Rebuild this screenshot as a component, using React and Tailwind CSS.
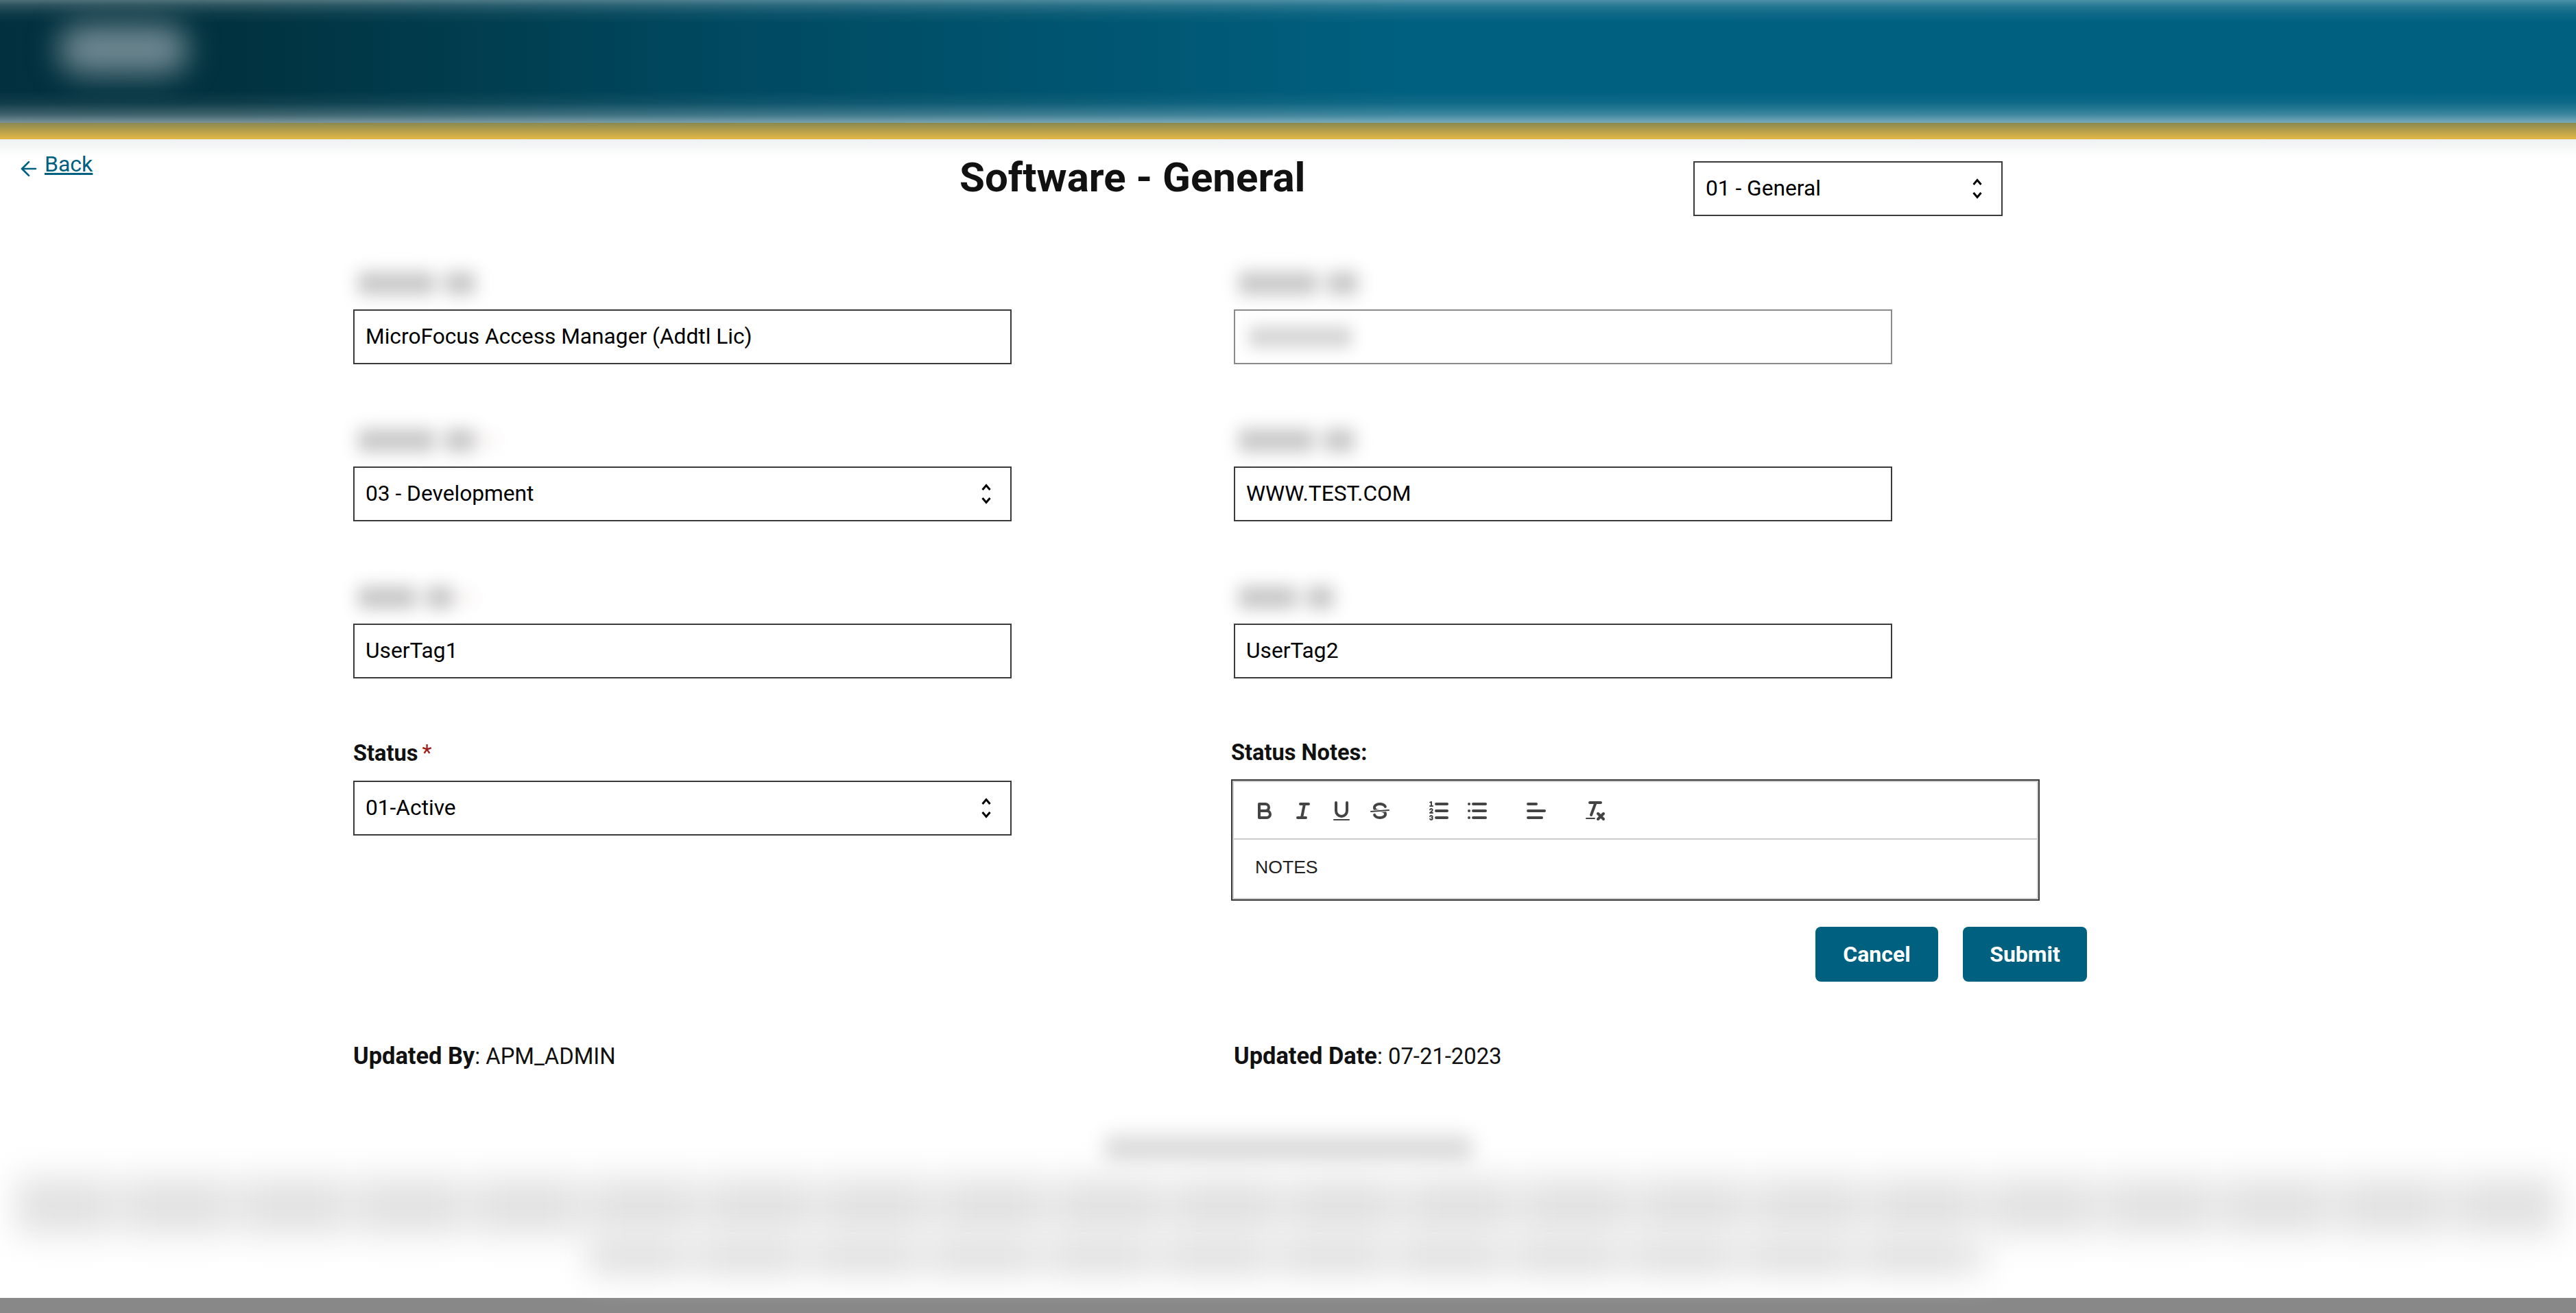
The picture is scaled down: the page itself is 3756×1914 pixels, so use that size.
import React from "react";
import { ArrowLeft } from "lucide-react";

// blurred-out label: two smudges, optional faint red star
const BlurLabel = ({ first = "w-[112px]", second = "w-[45px]", star }) => (
  <div className="h-[80px] flex items-center pt-[4px] pl-[7px]">
    <div className="flex items-center gap-[14px] blur-[12px]">
      <div className={`h-[34px] bg-[#c8c8c8] ${first}`} />
      <div className={`h-[34px] bg-[#c8c8c8] ${second}`} />
      {star && <div className="h-[16px] w-[10px] bg-[#eed8d8]" />}
    </div>
  </div>
);

const Stepper = () => (
  <svg viewBox="0 0 16 30" className="w-[16px] h-[30px] mr-[27px] shrink-0" fill="none" stroke="#000000" strokeWidth="3">
    <path d="M2.5 9 L8 2.5 L13.5 9" />
    <path d="M2.5 21 L8 27.5 L13.5 21" />
  </svg>
);

const Field = ({ children, disabled }) => (
  <div
    className={`h-[80px] border-2 flex items-center justify-between pl-[16px] text-[31.7px] text-black bg-white ${
      disabled ? "border-[#8a8a8a]" : "border-[#3a3a3a]"
    }`}
  >
    {children}
  </div>
);

const SelectField = ({ value }) => (
  <Field>
    <span>{value}</span>
    <Stepper />
  </Field>
);

const Icon = ({ children, className = "" }) => (
  <svg
    viewBox="0 0 18 18"
    className={`w-[36px] h-[36px] shrink-0 ${className}`}
    fill="none"
    stroke="#444444"
    strokeWidth="2"
    strokeLinecap="round"
    strokeLinejoin="round"
  >
    {children}
  </svg>
);

const Toolbar = () => (
  <div className="h-[84px] shrink-0 border-b-2 border-[#cccccc] flex items-center gap-[20px] pl-[27px] pt-[1px]">
    <Icon>
      <path d="M5,4H9.5A2.5,2.5,0,0,1,12,6.5v0A2.5,2.5,0,0,1,9.5,9H5V4Z" />
      <path d="M5,9h5.5A2.5,2.5,0,0,1,13,11.5v0A2.5,2.5,0,0,1,10.5,14H5V9Z" />
    </Icon>
    <Icon>
      <line x1="7" x2="13" y1="4" y2="4" />
      <line x1="5" x2="11" y1="14" y2="14" />
      <line x1="8" x2="10" y1="14" y2="4" />
    </Icon>
    <Icon>
      <path d="M5,3V9a4.012,4.012,0,0,0,4,4H9a4.012,4.012,0,0,0,4-4V3" />
      <rect x="3" y="15" width="12" height="1" rx="0.5" ry="0.5" fill="#444444" stroke="none" />
    </Icon>
    <Icon className="mr-[30px]">
      <line x1="15.5" x2="2.5" y1="8.5" y2="9.5" strokeWidth="1" />
      <path
        fill="#444444"
        stroke="none"
        d="M9.007,8C6.542,7.791,6,7.519,6,6.5,6,5.792,7.283,5,9,5c1.571,0,2.765.679,2.969,1.309a1,1,0,0,0,1.9-.617C13.356,4.106,11.354,3,9,3,6.2,3,4,4.538,4,6.5a3.2,3.2,0,0,0,.5,1.843Z"
      />
      <path
        fill="#444444"
        stroke="none"
        d="M8.984,10C11.457,10.208,12,10.479,12,11.5c0,.708-1.283,1.5-3,1.5-1.571,0-2.765-.679-2.969-1.309a1,1,0,1,0-1.9.617C4.644,13.894,6.646,15,9,15c2.8,0,5-1.538,5-3.5a3.2,3.2,0,0,0-.5-1.843Z"
      />
    </Icon>
    <Icon>
      <line x1="7" x2="15" y1="4" y2="4" />
      <line x1="7" x2="15" y1="9" y2="9" />
      <line x1="7" x2="15" y1="14" y2="14" />
      <line x1="2.5" x2="4.5" y1="5.5" y2="5.5" strokeWidth="1" />
      <path
        fill="#444444"
        stroke="none"
        d="M3.5,6A0.5,0.5,0,0,1,3,5.5V3.085l-0.276.138A0.5,0.5,0,0,1,2.053,3c-0.124-.247-0.023-0.324.224-0.447l1-.5A0.5,0.5,0,0,1,4,2.5v3A0.5,0.5,0,0,1,3.5,6Z"
      />
      <path strokeWidth="1" d="M4.5,10.5h-2c0-.234,1.85-1.076,1.85-2.234A0.959,0.959,0,0,0,2.5,8.156" />
      <path strokeWidth="1" d="M2.5,14.846a0.959,0.959,0,0,0,1.85-.109A0.7,0.7,0,0,0,3.75,14a0.688,0.688,0,0,0,.6-0.736,0.959,0.959,0,0,0-1.85-.109" />
    </Icon>
    <Icon className="mr-[30px]">
      <line x1="6" x2="15" y1="4" y2="4" />
      <line x1="6" x2="15" y1="9" y2="9" />
      <line x1="6" x2="15" y1="14" y2="14" />
      <line x1="3" x2="3" y1="4" y2="4" />
      <line x1="3" x2="3" y1="9" y2="9" />
      <line x1="3" x2="3" y1="14" y2="14" />
    </Icon>
    <Icon className="mr-[30px]">
      <line x1="3" x2="15" y1="9" y2="9" />
      <line x1="3" x2="13" y1="14" y2="14" />
      <line x1="3" x2="9" y1="4" y2="4" />
    </Icon>
    <Icon>
      <line x1="5" x2="13" y1="3" y2="3" />
      <line x1="6" x2="9.35" y1="12" y2="3" />
      <line x1="11" x2="15" y1="11" y2="15" />
      <line x1="15" x2="11" y1="11" y2="15" />
      <rect x="2" y="14" width="7" height="1" rx="0.5" ry="0.5" fill="#444444" stroke="none" />
    </Icon>
  </div>
);

export default function App() {
  return (
    <div className="w-[3756px] h-[1914px] overflow-hidden bg-white flex flex-col font-['Roboto',sans-serif]">
      {/* Header band, blurred out */}
      <div className="h-[179px] shrink-0 overflow-hidden flex items-start bg-[linear-gradient(180deg,rgba(255,255,255,0.3)_0px,rgba(255,255,255,0.16)_8px,rgba(255,255,255,0.05)_20px,rgba(255,255,255,0)_34px,rgba(255,255,255,0)_132px,rgba(255,255,255,0.06)_150px,rgba(255,255,255,0.24)_167px,rgba(255,255,255,0.48)_179px),linear-gradient(90deg,#03303f_0px,#01323f_340px,#004a62_1100px,#00607f_2050px,#006080_3756px)]">
        <div className="ml-[85px] mt-[36px] w-[190px] h-[72px] bg-[#6f8891] blur-[22px] rounded-full" />
      </div>
      <div className="h-[24px] shrink-0 bg-[linear-gradient(180deg,#8a8850,#e4b945)]" />

      {/* Back, title and section select */}
      <div className="h-[168px] shrink-0 flex items-start pl-[25px] bg-[linear-gradient(180deg,#eef1f2_0px,#ffffff_26px)]">
        <a className="w-[1374px] mt-[12px] flex items-start text-[#006080] text-[32px] leading-[48px]">
          <ArrowLeft size={34} strokeWidth={1.9} className="mr-[6px] mt-[14px]" />
          <span className="underline">Back</span>
        </a>
        <h1 className="w-[1070px] mt-[16px] text-[60px] leading-[80px] font-bold text-[#111111]">Software - General</h1>
        <div className="w-[451px] mt-[32px]">
          <SelectField value="01 - General" />
        </div>
      </div>

      {/* Form */}
      <div className="pl-[515px] flex gap-[324px] shrink-0">
        <div className="w-[960px] flex flex-col">
          <BlurLabel />
          <Field>MicroFocus Access Manager (Addtl Lic)</Field>
          <div className="h-[69px]" />
          <BlurLabel star />
          <SelectField value="03 - Development" />
          <div className="h-[69px]" />
          <BlurLabel first="w-[85px]" second="w-[40px]" star />
          <Field>UserTag1</Field>
          <div className="h-[69px]" />
          <div className="h-[80px] flex items-center text-[32.6px] font-bold text-[#111111]">
            Status<span className="text-[#a01c1c] font-normal ml-[6px]">*</span>
          </div>
          <SelectField value="01-Active" />
        </div>
        <div className="w-[960px] flex flex-col">
          <BlurLabel first="w-[115px]" second="w-[45px]" />
          <Field disabled>
            <span className="block ml-[4px] w-[150px] h-[32px] bg-[#d6d6d6] blur-[11px]" />
          </Field>
          <div className="h-[69px]" />
          <BlurLabel first="w-[110px]" second="w-[45px]" />
          <Field>WWW.TEST.COM</Field>
          <div className="h-[69px]" />
          <BlurLabel first="w-[85px]" second="w-[40px]" />
          <Field>UserTag2</Field>
          <div className="h-[69px]" />
          <div className="h-[78px] flex items-center text-[32.6px] font-bold text-[#111111] -ml-[4px]">
            Status Notes:
          </div>
          <div className="-ml-[4px] w-[1179px] h-[177px] shrink-0 border-2 border-[#3a3a3a]">
            <div className="h-full border-2 border-[#cccccc] flex flex-col">
              <Toolbar />
              <div className="pl-[31px] pt-[22px] text-[26.6px] leading-[36px] text-[#222222] font-['Liberation_Sans',sans-serif]">NOTES</div>
            </div>
          </div>
          <div className="flex justify-end gap-[36px] mt-[38px] w-[1244px] shrink-0">
            <button className="w-[179px] h-[80px] rounded-[8px] bg-[#006080] text-white font-bold text-[32px]">Cancel</button>
            <button className="w-[181px] h-[80px] rounded-[8px] bg-[#006080] text-white font-bold text-[32px]">Submit</button>
          </div>
        </div>
      </div>

      {/* Updated by / date */}
      <div className="pl-[515px] flex gap-[324px] mt-[84px] text-[32.8px] leading-[48px] text-[#111111] shrink-0">
        <div className="w-[960px]"><b className="text-[34.4px]">Updated By</b>: APM_ADMIN</div>
        <div className="w-[960px]"><b className="text-[34.4px]">Updated Date</b>: 07-21-2023</div>
      </div>

      {/* Legal notice, blurred out */}
      <div className="flex-1 flex flex-col items-center pt-[90px]">
        <div className="w-[535px] h-[40px] bg-[#dcdcdc] blur-[14px]" />
        <div className="w-[3710px] h-[84px] mt-[22px] blur-[24px] bg-[repeating-linear-gradient(90deg,#e2e2e2_0px,#e2e2e2_130px,#eaeaea_130px,#eaeaea_170px)]" />
        <div className="w-[2040px] h-[60px] blur-[22px] bg-[repeating-linear-gradient(90deg,#e2e2e2_0px,#e2e2e2_130px,#eaeaea_130px,#eaeaea_170px)]" />
      </div>
      <div className="h-[22px] shrink-0 bg-[#888888]" />
    </div>
  );
}
